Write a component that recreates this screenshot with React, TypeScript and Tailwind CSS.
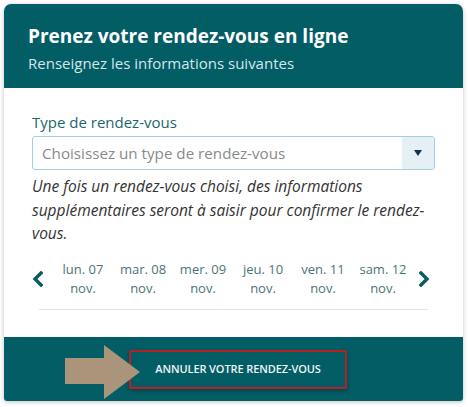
import React from "react";

const F = { fontFamily: "'Open Sans', sans-serif" };

function Chevron({ dir }: { dir: "left" | "right" }) {
  return (
    <svg width="11" height="16" viewBox="0 0 11 16">
      {dir === "left" ? (
        <path d="M9 2 L3 8 L9 14" fill="none" stroke="#0a5c63" strokeWidth="3.4" strokeLinecap="square" />
      ) : (
        <path d="M2 2 L8 8 L2 14" fill="none" stroke="#0a5c63" strokeWidth="3.4" strokeLinecap="square" />
      )}
    </svg>
  );
}

const days = [
  ["lun. 07", "nov."],
  ["mar. 08", "nov."],
  ["mer. 09", "nov."],
  ["jeu. 10", "nov."],
  ["ven. 11", "nov."],
  ["sam. 12", "nov."],
];

export default function App() {
  return (
    <div className="w-[468px] h-[407px] bg-white pt-[4px] pl-[4px]" style={F}>
      <div className="w-[459px] h-[397px] flex flex-col rounded-t-[7px] rounded-b-[3px] overflow-hidden shadow-[0_1px_4px_rgba(0,0,0,0.25)]">
        <div className="h-[84px] bg-[#035d65] pl-[24px] pt-[20px]">
          <div className="text-[19px] font-bold text-white leading-[24px]">Prenez votre rendez-vous en ligne</div>
          <div className="text-[15px] text-[#d3e7e9] leading-[20px] mt-[5px]">Renseignez les informations suivantes</div>
        </div>
        <div className="flex-1 bg-white px-[28px] pt-[23px]">
          <div className="text-[15px] text-[#1a676d] leading-[22px]">Type de rendez-vous</div>
          <div className="mt-[3px] h-[34px] flex border border-[#a3d0e1] rounded-[3px] overflow-hidden">
            <div className="flex-1 flex items-center pl-[9px] text-[15.2px] text-[#8a8a8a]">Choisissez un type de rendez-vous</div>
            <div className="w-[32px] bg-[#e4eff6] flex items-center justify-center">
              <svg width="8" height="6" viewBox="0 0 8 6"><path d="M0 0 L8 0 L4 6 Z" fill="#173049" /></svg>
            </div>
          </div>
          <div className="mt-[5px] italic text-[15.5px] text-[#333] leading-[23.5px]">
            Une fois un rendez-vous choisi, des informations supplémentaires seront à saisir pour confirmer le rendez-vous.
          </div>
          <div className="mt-[14px] flex items-center">
            <div className="w-[21px] flex justify-start pl-[0px]"><Chevron dir="left" /></div>
            {days.map((d) => (
              <div key={d[0]} className="w-[60px] text-center text-[13px] text-[#4c7479] leading-[19.5px]">
                <div>{d[0]}</div>
                <div>{d[1]}</div>
              </div>
            ))}
            <div className="w-[22px] flex justify-end pr-[5px]"><Chevron dir="right" /></div>
          </div>
          <div className="mt-[10px] mx-[7px] h-px bg-[#e3e3e3]" />
        </div>
        <div className="h-[64px] bg-[#035d65] relative pl-[125px] pt-[13px]">
          <div className="w-[218px] h-[39px] border-2 border-[#b71f25] rounded-[2px] flex items-center justify-center shadow-[0_2px_4px_rgba(0,0,0,0.3)]">
            <span className="text-[11px] font-semibold text-[#eef5f5] tracking-[-0.1px]">ANNULER VOTRE RENDEZ-VOUS</span>
          </div>
          <svg className="absolute left-[61px] top-[8px]" width="80" height="56" viewBox="0 0 80 56">
            <path d="M0 13 L39 13 L39 0 L75 27 L39 54 L39 39 L0 39 Z" fill="#ab957a" />
          </svg>
        </div>
      </div>
    </div>
  );
}
